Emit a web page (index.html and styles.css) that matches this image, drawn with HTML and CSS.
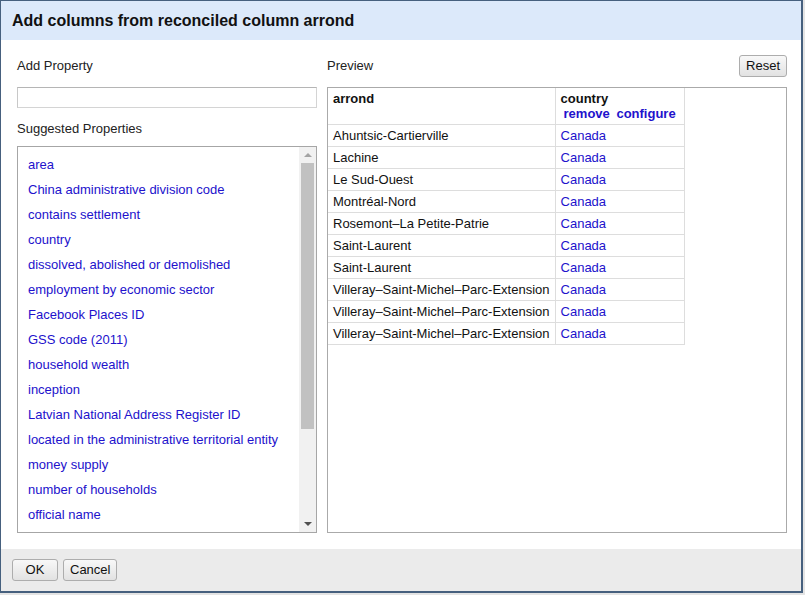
FILE: index.html
```html
<!DOCTYPE html>
<html>
<head>
<meta charset="utf-8">
<link rel="stylesheet" href="styles.css">
</head>
<body>
<div class="dialog">
  <div class="dialog-header">Add columns from reconciled column arrond</div>
  <div class="dialog-body">
    <div class="left-col">
      <div class="row-head"><span class="label">Add Property</span></div>
      <input class="prop-input" type="text">
      <div class="label suggested">Suggested Properties</div>
      <div class="suggest-box">
        <ul class="suggest-list">
          <li><a>area</a></li>
          <li><a>China administrative division code</a></li>
          <li><a>contains settlement</a></li>
          <li><a>country</a></li>
          <li><a>dissolved, abolished or demolished</a></li>
          <li><a>employment by economic sector</a></li>
          <li><a>Facebook Places ID</a></li>
          <li><a>GSS code (2011)</a></li>
          <li><a>household wealth</a></li>
          <li><a>inception</a></li>
          <li><a>Latvian National Address Register ID</a></li>
          <li><a>located in the administrative territorial entity</a></li>
          <li><a>money supply</a></li>
          <li><a>number of households</a></li>
          <li><a>official name</a></li>
        </ul>
        <div class="scrollbar">
          <div class="arrow-btn"><span class="tri-up"></span></div>
          <div class="track"><div class="thumb"></div></div>
          <div class="arrow-btn"><span class="tri-down"></span></div>
        </div>
      </div>
    </div>
    <div class="right-col">
      <div class="row-head between">
        <span class="label">Preview</span>
        <button class="btn">Reset</button>
      </div>
      <div class="preview-box">
        <table class="preview">
          <thead>
            <tr>
              <th>arrond</th>
              <th>country<div class="actions"><a class="act">remove</a> <a class="act">configure</a></div></th>
            </tr>
          </thead>
          <tbody>
            <tr><td>Ahuntsic-Cartierville</td><td><a>Canada</a></td></tr>
            <tr><td>Lachine</td><td><a>Canada</a></td></tr>
            <tr><td>Le Sud-Ouest</td><td><a>Canada</a></td></tr>
            <tr><td>Montréal-Nord</td><td><a>Canada</a></td></tr>
            <tr><td>Rosemont–La Petite-Patrie</td><td><a>Canada</a></td></tr>
            <tr><td>Saint-Laurent</td><td><a>Canada</a></td></tr>
            <tr><td>Saint-Laurent</td><td><a>Canada</a></td></tr>
            <tr><td>Villeray–Saint-Michel–Parc-Extension</td><td><a>Canada</a></td></tr>
            <tr><td>Villeray–Saint-Michel–Parc-Extension</td><td><a>Canada</a></td></tr>
            <tr><td>Villeray–Saint-Michel–Parc-Extension</td><td><a>Canada</a></td></tr>
          </tbody>
        </table>
      </div>
    </div>
  </div>
  <div class="dialog-footer">
    <button class="btn ok">OK</button>
    <button class="btn">Cancel</button>
  </div>
</div>
</body>
</html>
```

FILE: styles.css
```css
* { box-sizing: border-box; }
html, body { margin: 0; padding: 0; }
body {
  background: #e4e4e4;
  font-family: "Liberation Sans", Arial, sans-serif;
  font-size: 13px;
  color: #222;
  width: 805px;
  height: 595px;
  overflow: hidden;
}
.dialog {
  width: 803px;
  height: 593px;
  border: 1px solid #46607e;
  border-right-width: 2px;
  border-bottom-width: 2px;
  background: #fff;
  display: flex;
  flex-direction: column;
}
.dialog-header {
  height: 39px;
  flex: none;
  background: #dce9fa;
  font-weight: bold;
  font-size: 16px;
  color: #111;
  padding: 11px 0 0 11px;
  line-height: 18px;
}
.dialog-body {
  height: 509px;
  flex: none;
  display: flex;
  gap: 10px;
  padding: 14px 0 0 16px;
}
.left-col {
  width: 300px;
  display: flex;
  flex-direction: column;
}
.right-col {
  width: 460px;
  display: flex;
  flex-direction: column;
}
.row-head {
  height: 23px;
  display: flex;
  align-items: center;
}
.row-head.between { justify-content: space-between; align-items: flex-end; }
.label { line-height: 15px; color: #222; }
.row-head.between .label { align-self: center; }
.prop-input {
  margin: 10px 0 0 0;
  width: 300px;
  height: 21px;
  border: 1px solid #d4d4d4;
  border-top-color: #b5b5b5;
  border-left-color: #c8c8c8;
  padding: 0 3px;
  font: inherit;
  outline: none;
}
.suggested {
  margin-top: 13px;
  margin-bottom: 10px;
}
.suggest-box {
  height: 387px;
  border: 1px solid #a6a6a6;
  display: flex;
  overflow: hidden;
}
.suggest-list {
  flex: 1;
  list-style: none;
  margin: 0;
  padding: 5px 0 0 10px;
  overflow: hidden;
}
.suggest-list li {
  line-height: 25px;
  height: 25px;
  white-space: nowrap;
}
a { color: #2211cc; text-decoration: none; }
.scrollbar {
  width: 17px;
  flex: none;
  background: #f1f1f1;
  display: flex;
  flex-direction: column;
}
.arrow-btn {
  height: 16px;
  flex: none;
  display: flex;
  align-items: center;
  justify-content: center;
}
.tri-up {
  width: 0; height: 0;
  border-left: 4px solid transparent;
  border-right: 4px solid transparent;
  border-bottom: 4px solid #a3a3a3;
}
.tri-down {
  width: 0; height: 0;
  border-left: 4px solid transparent;
  border-right: 4px solid transparent;
  border-top: 4px solid #505050;
}
.track {
  flex: 1;
  padding: 0 2px 0 2px;
}
.thumb {
  height: 266px;
  background: #c1c1c1;
}
.preview-box {
  margin-top: 10px;
  height: 446px;
  border: 1px solid #aaa;
  overflow: hidden;
}
.preview {
  border-collapse: collapse;
}
.preview th, .preview td {
  border: 1px solid #ddd;
  border-top: none;
  text-align: left;
  vertical-align: top;
  line-height: 15px;
  padding: 3px 5px 3px 5px;
  white-space: nowrap;
  color: #111;
}
.preview th:first-child, .preview td:first-child { border-left: none; }
.preview th {
  padding: 3px 5px 3px 5px;
  height: 36px;
}
.actions { padding-left: 3px; }
.act { font-weight: bold; margin-right: 3px; }
.preview td { height: 22px; }
.dialog-footer {
  flex: 1;
  background: #ebebeb;
  padding: 10px 0 0 11px;
  display: flex;
  gap: 5px;
  align-items: flex-start;
}
.btn {
  font-family: "Liberation Sans", Arial, sans-serif;
  font-size: 13px;
  color: #111;
  height: 22px;
  padding: 0 6px;
  border: 1px solid #adadad;
  border-radius: 3px;
  background: linear-gradient(#f8f8f8, #e2e2e2);
  line-height: 20px;
}
.ok { min-width: 46px; }
```
